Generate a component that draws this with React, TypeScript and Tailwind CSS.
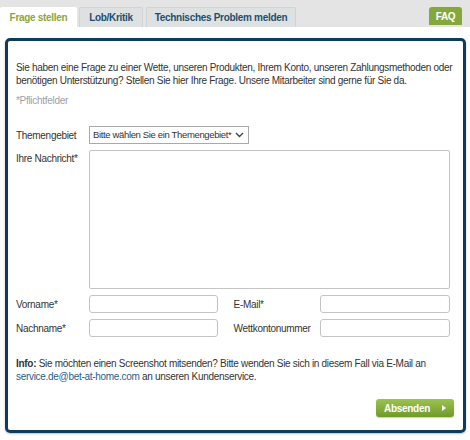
export default function App() {
  const font = "font-['Liberation_Sans',Arial,sans-serif]"
  return (
    <div className={`w-[470px] h-[440px] bg-white text-[10px] tracking-[-0.3px] text-[#333] ${font}`}>
      {/* Tabs */}
      <div className="h-[27px] bg-[#e4e4e4] flex items-end whitespace-nowrap">
        <div className="h-[20px] w-[77px] bg-white flex items-center justify-center font-bold text-[#8aa63f] rounded-t-[2px]">
          Frage stellen
        </div>
        <div className="ml-[2px] h-[20px] w-[64px] bg-[#dde1e1] border border-b-0 border-[#d0d4d4] flex items-center justify-center font-bold text-[#1f4e6e] rounded-t-[2px]">
          Lob/Kritik
        </div>
        <div className="ml-[3px] h-[20px] w-[150px] bg-[#dde1e1] border border-b-0 border-[#d0d4d4] flex items-center justify-center font-bold text-[#1f4e6e] rounded-t-[2px]">
          Technisches Problem melden
        </div>
        <div className="ml-auto mr-[8px] mb-[2px] h-[18px] w-[33px] bg-[#84a83c] rounded-t-[3px] flex items-center justify-center font-bold text-white">
          FAQ
        </div>
      </div>

      <div className="h-[11px] bg-white" />

      {/* Form box */}
      <div className="ml-[5px] mr-[4px] h-[395px] border-[3px] border-[#0e3c5b] rounded-[5px] shadow-[0_1px_2px_rgba(0,0,0,0.25)] pt-[20px] pl-[8px] pr-[13px]">
        <p className="leading-[13px] whitespace-nowrap">
          Sie haben eine Frage zu einer Wette, unseren Produkten, Ihrem Konto, unseren Zahlungsmethoden oder
          <br />
          benötigen Unterstützung? Stellen Sie hier Ihre Frage. Unsere Mitarbeiter sind gerne für Sie da.
        </p>
        <p className="mt-[7px] text-[#a0a0a0] leading-[13px]">*Pflichtfelder</p>

        <div className="mt-[19px] flex items-center whitespace-nowrap">
          <span className="w-[73px]">Themengebiet</span>
          <div className="w-[160px] h-[18px] border border-[#a9a9a9] flex items-center pl-[3px] pr-[4px] justify-between bg-white">
            <span className="text-[9.5px] tracking-[-0.35px]">Bitte wählen Sie ein Themengebiet*</span>
            <svg className="shrink-0" width="9" height="6" viewBox="0 0 9 6">
              <path d="M1 1 L4.5 4.5 L8 1" fill="none" stroke="#444" strokeWidth="1.4" />
            </svg>
          </div>
        </div>

        <div className="mt-[6px] flex items-start">
          <span className="w-[73px] pt-[1px]">Ihre Nachricht*</span>
          <div className="w-[362px] h-[139px] border border-[#c4c4c4] rounded-[2px] bg-white" />
        </div>

        <div className="mt-[6px] flex items-center whitespace-nowrap">
          <span className="w-[73px]">Vorname*</span>
          <div className="w-[129px] h-[18px] border border-[#c4c4c4] rounded-[3px]" />
          <span className="ml-[16px] w-[87px]">E-Mail*</span>
          <div className="w-[130px] h-[18px] border border-[#c4c4c4] rounded-[3px]" />
        </div>

        <div className="mt-[6px] flex items-center whitespace-nowrap">
          <span className="w-[73px]">Nachname*</span>
          <div className="w-[129px] h-[18px] border border-[#c4c4c4] rounded-[3px]" />
          <span className="ml-[16px] w-[87px]">Wettkontonummer</span>
          <div className="w-[130px] h-[18px] border border-[#c4c4c4] rounded-[3px]" />
        </div>

        <p className="mt-[20px] leading-[13px]">
          <span className="font-bold">Info:</span> Sie möchten einen Screenshot mitsenden? Bitte wenden Sie sich in diesem Fall via E-Mail an
          <br />
          <span className="text-[#1e5f8c]">service.de@bet-at-home.com</span> an unseren Kundenservice.
        </p>

        <div className="mt-[16px] mr-[-4px] flex justify-end">
          <div className="w-[78px] h-[18px] rounded-[3px] bg-gradient-to-b from-[#9cc34e] to-[#6f9a2a] flex items-center justify-center gap-[12px] font-bold text-white shadow-[0_1px_1px_rgba(0,0,0,0.2)]">
            <span>Absenden</span>
            <svg width="4" height="6" viewBox="0 0 4 6">
              <path d="M0 0 L4 3 L0 6 Z" fill="#fff" />
            </svg>
          </div>
        </div>
      </div>
    </div>
  )
}
